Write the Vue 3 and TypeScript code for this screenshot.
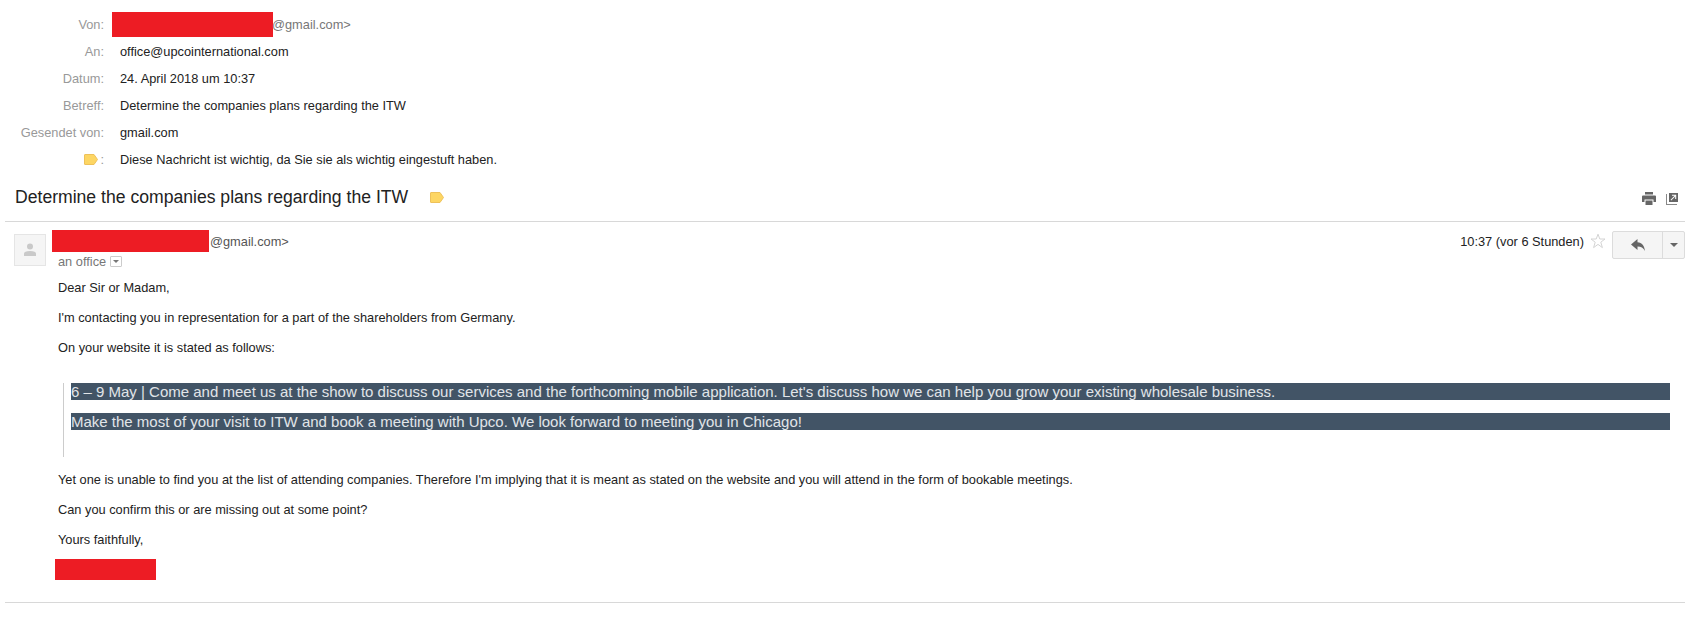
<script setup lang="ts">
interface HeaderRow { label: string; value: string }
const rows: HeaderRow[] = [
  { label: 'An:', value: 'office@upcointernational.com' },
  { label: 'Datum:', value: '24. April 2018 um 10:37' },
  { label: 'Betreff:', value: 'Determine the companies plans regarding the ITW' },
  { label: 'Gesendet von:', value: 'gmail.com' },
]
</script>

<template>
  <div class="page">
    <section class="meta">
      <div class="row first">
        <div class="label">Von:</div>
        <div class="value from"><span class="redact r1"></span><span class="muted">@gmail.com&gt;</span></div>
      </div>
      <div v-for="r in rows" :key="r.label" class="row">
        <div class="label">{{ r.label }}</div>
        <div class="value">{{ r.value }}</div>
      </div>
      <div class="row">
        <div class="label">
          <svg class="tag small" viewBox="0 0 14 11"><path d="M1 .5H10L13.5 5.5L10 10.5H1Q.5 10.5 .5 10V1Q.5 .5 1 .5Z" /></svg>:
        </div>
        <div class="value">Diese Nachricht ist wichtig, da Sie sie als wichtig eingestuft haben.</div>
      </div>
    </section>

    <header class="subject">
      <h1>Determine the companies plans regarding the ITW</h1>
      <svg class="tag" viewBox="0 0 14 11"><path d="M1 .5H10L13.5 5.5L10 10.5H1Q.5 10.5 .5 10V1Q.5 .5 1 .5Z" /></svg>
      <div class="subject-icons">
        <svg width="14" height="13" viewBox="0 0 14 13"><path fill="#666" fill-rule="evenodd" d="M3 0H11V2.5H3ZM1 3.5H13Q14 3.5 14 4.5V10H11.5V7.5H2.5V10H0V4.5Q0 3.5 1 3.5ZM3.5 8.5H10.5V13H3.5Z" /></svg>
        <svg width="12" height="12" viewBox="0 0 12 12"><path fill="#666" fill-rule="evenodd" d="M3 0H12V9H3ZM6 1.8V2.8H8.6L4.6 6.8L5.2 7.4L9.2 3.4V6H10.2V1.8Z" /><path fill="#888" d="M0 1H1V11H11V12H0Z" /></svg>
      </div>
    </header>

    <article class="message">
      <div class="msg-head">
        <div class="avatar">
          <svg width="14" height="14" viewBox="0 0 14 14"><circle cx="7" cy="3.5" r="3" fill="#c9c9c9" /><path fill="#c9c9c9" d="M1 13V10.5Q1 8 7 8T13 10.5V13Z" /></svg>
        </div>
        <div class="sender">
          <div class="sender-line"><span class="redact r2"></span><span class="muted-dark">@gmail.com&gt;</span></div>
          <div class="to-line">an office <span class="caret-box"><i></i></span></div>
        </div>
        <div class="msg-actions">
          <span class="time">10:37 (vor 6 Stunden)</span>
          <svg class="star" width="16" height="16" viewBox="0 0 16 16"><path fill="none" stroke="#d4d4d4" d="M8 1.2L9.8 6H15L10.8 9.2L12.4 14.6L8 11.4L3.6 14.6L5.2 9.2L1 6H6.2Z" /></svg>
          <div class="reply-btn">
            <span class="reply-main">
              <svg width="14" height="12" viewBox="0 0 14 12"><path fill="#666" d="M6.5 0V3.2C11 3.6 13.4 6.6 14 12C12.4 8.8 10 7.4 6.5 7.4V11L0 5.5Z" /></svg>
            </span>
            <span class="reply-more"><i></i></span>
          </div>
        </div>
      </div>

      <div class="body">
        <p>Dear Sir or Madam,</p>
        <p>I'm contacting you in representation for a part of the shareholders from Germany.</p>
        <p>On your website it is stated as follows:</p>
        <blockquote>
          <p>6 – 9 May | Come and meet us at the show to discuss our services and the forthcoming mobile application. Let's discuss how we can help you grow your existing wholesale business.</p>
          <p>Make the most of your visit to ITW and book a meeting with Upco. We look forward to meeting you in Chicago!</p>
        </blockquote>
        <p>Yet one is unable to find you at the list of attending companies. Therefore I'm implying that it is meant as stated on the website and you will attend in the form of bookable meetings.</p>
        <p>Can you confirm this or are missing out at some point?</p>
        <p>Yours faithfully,</p>
        <div class="redact r3"></div>
      </div>
    </article>
  </div>
</template>

<style>
html, body { margin: 0; background: #fff; }
</style>

<style scoped>
.page {
  width: 1699px;
  height: 622px;
  overflow: hidden;
  box-sizing: border-box;
  padding: 12px 14px 0 5px;
  font-family: "Liberation Sans", Arial, sans-serif;
  font-size: 12.8px;
  color: #222;
}
.redact { display: inline-block; background: #ed1c24; flex: none; }
.meta { display: flex; flex-direction: column; }
.row { display: flex; height: 27px; align-items: center; }
.row.first { height: 25px; margin-bottom: 1px; }
.label { width: 99px; text-align: right; color: #999; white-space: nowrap; }
.value { margin-left: 16px; white-space: nowrap; }
.from { display: flex; align-items: center; margin-left: 8px; }
.r1 { width: 161px; height: 25px; margin-right: -1px; }
.muted { color: #777; }
.tag { width: 14px; height: 11px; vertical-align: -1px; }
.tag path { fill: #fdd663; stroke: #eec15a; }
.tag.small { margin-right: 2px; }
.subject {
  display: flex;
  align-items: center;
  height: 48px;
  box-sizing: border-box;
  margin-top: 1px;
  padding: 0 7px 0 10px;
  border-bottom: 1px solid #d8d8d8;
}
.subject h1 { margin: 0 22px 0 0; font-size: 17.6px; font-weight: 400; color: #222; white-space: nowrap; }
.subject-icons { margin-left: auto; display: flex; align-items: center; gap: 10px; padding-top: 2px; }
.message { border-bottom: 1px solid #d8d8d8; height: 381px; box-sizing: border-box; }
.msg-head { display: flex; height: 58px; padding-top: 8px; box-sizing: border-box; }
.avatar {
  width: 32px; height: 32px; box-sizing: border-box; margin: 4px 6px 0 9px;
  background: #f5f5f5; border: 1px solid #e5e5e5;
  display: flex; align-items: center; justify-content: center;
}
.sender-line { display: flex; align-items: center; height: 22px; color: #555; }
.r2 { width: 157px; height: 22px; margin-right: 1px; }
.to-line { margin-left: 6px; height: 18px; color: #777; display: flex; align-items: center; gap: 5px; }
.caret-box {
  width: 12px; height: 11px; box-sizing: border-box; border: 1px solid #ccc; border-radius: 1px;
  display: flex; align-items: center; justify-content: center; margin-left: -1px;
}
.caret-box i { border: 3px solid transparent; border-top: 3px solid #777; border-bottom: 0; }
.msg-actions { margin-left: auto; display: flex; align-items: flex-start; }
.time { margin-top: 4px; color: #222; white-space: nowrap; }
.star { margin: 3px 6px 0 6px; }
.reply-btn {
  display: flex; height: 28px; margin-top: 1px; box-sizing: border-box;
  border: 1px solid #dcdcdc; border-radius: 2px; background: #f5f5f5;
}
.reply-main { width: 49px; display: flex; align-items: center; justify-content: center; border-right: 1px solid #dcdcdc; }
.reply-more { width: 21px; display: flex; align-items: center; justify-content: center; }
.reply-more i { border: 4px solid transparent; border-top: 4px solid #666; border-bottom: 0; }
.body { padding-left: 53px; }
.body > p { margin: 0 0 15px; line-height: 15px; white-space: nowrap; }
blockquote {
  margin: 28px 15px 15px 5px;
  padding: 0 0 14px 7px;
  border-left: 1px solid #ccc;
}
blockquote p {
  margin: 0 0 13px;
  background: #425466;
  color: #e1e5e9;
  font-size: 15px;
  line-height: 17px;
  white-space: nowrap;
}
.r3 { display: block; width: 101px; height: 21px; margin: -3px 0 0 -3px; }
</style>
